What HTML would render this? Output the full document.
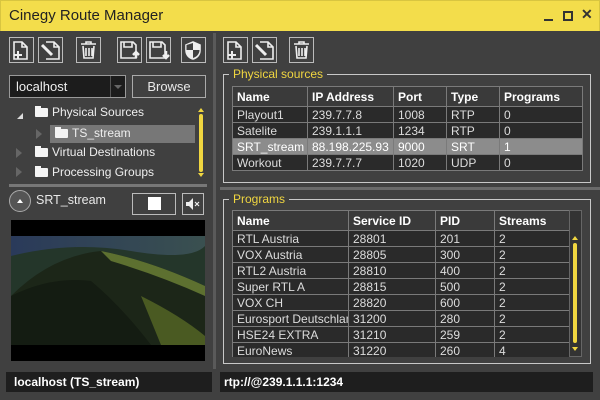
<!DOCTYPE html>
<html><head><style>
*{margin:0;padding:0;box-sizing:border-box}
body{width:600px;height:400px;background:#404040;font-family:"Liberation Sans",sans-serif;color:#e8e8e8;position:relative;overflow:hidden;font-size:12px}
.a{position:absolute}
.tb{left:0;top:0;width:600px;height:31px;background:#f3dd4b;border:1px solid #d8c540;border-bottom:none}
table{border-collapse:collapse;position:absolute;table-layout:fixed}
td,th{border:1px solid #7a7a7a;height:16px;padding:0 4px;font-size:12px;text-align:left;white-space:nowrap;overflow:hidden;color:#ddd;line-height:14px}
th{height:20px;background:#3a3a3a;color:#fff;font-weight:bold;border-color:#7a7a7a}
td{background:#2a2a2a}
tr.sel td{background:#8c8c8c;color:#fff}
.grp{position:absolute;border:1px solid #c8c8c8}
.gt{position:absolute;background:#404040;color:#f0d640;padding:0 4px;font-size:12px;top:-9px;left:5px;line-height:16px}
.tree{position:absolute;font-size:12px;color:#eee}
.fold{display:inline-block;position:relative;width:13px;height:9px;background:#f4f4f4;border-radius:1px;vertical-align:-1px;margin-right:4px}
.fold:before{content:"";position:absolute;left:0;top:-2px;width:6px;height:3px;background:#f4f4f4}
.tri{position:absolute;width:0;height:0;border-top:5px solid transparent;border-bottom:5px solid transparent;border-left:6px solid #666}
</style></head><body>
<div class="a tb"></div>
<div class="a" style="left:9px;top:7px;font-size:15px;color:#222">Cinegy Route Manager</div>
<div class="a" style="left:544px;top:19px;width:9px;height:2px;background:#333"></div>
<div class="a" style="left:563px;top:11px;width:10px;height:10px;border:2px solid #333"></div>
<div class="a" style="left:581px;top:6px;font-size:14px;color:#333;font-weight:bold">✕</div>

<svg class="a" style="left:0;top:0" width="600" height="70" fill="none" stroke="#eee" stroke-width="1.6">
<g><rect x="9.5" y="37.5" width="24" height="25" stroke="#bbb" stroke-width="1"/><path d="M14 42h8l5 5v12H14z M22 42v5h5"/><path d="M14 55h8M18 51v8" stroke-width="2"/></g>
<g><rect x="38.5" y="37.5" width="24" height="25" stroke="#bbb" stroke-width="1"/><path d="M46 42h8l5 5v12H46 M54 42v5h5"/><path d="M42 45l10 10" stroke-width="3"/></g>
<g><rect x="76.5" y="37.5" width="24" height="25" stroke="#bbb" stroke-width="1"/><path d="M81 44h15M86 44v-2h5v2M83 46l1 12h9l1-12M86 48v8M89 48v8M92 48v8"/></g>
<g><rect x="117.5" y="37.5" width="24" height="25" stroke="#bbb" stroke-width="1"/><path d="M121 42h12l3 3v13h-15z M124 42v5h8v-5"/><path d="M136 58v-6M133 55l3-3 3 3" stroke-width="2.5"/></g>
<g><rect x="146.5" y="37.5" width="24" height="25" stroke="#bbb" stroke-width="1"/><path d="M150 42h12l3 3v13h-15z M153 42v5h8v-5"/><path d="M166 51v6M163 55l3 3 3-3" stroke-width="2.5"/></g>
<g><rect x="181.5" y="37.5" width="24" height="25" stroke="#bbb" stroke-width="1"/><path d="M193 42l7 3v5c0 5-3 8-7 9-4-1-7-4-7-9v-5z" fill="#eee"/><path d="M193 50h6.5v0c0 4-3 7-6.5 8z M186.5 45v5h6.5v-7z" fill="#404040" stroke="none"/></g>
<g><rect x="223.5" y="37.5" width="24" height="25" stroke="#bbb" stroke-width="1"/><path d="M228 42h8l5 5v12H228z M236 42v5h5"/><path d="M228 55h8M232 51v8" stroke-width="2"/></g>
<g><rect x="252.5" y="37.5" width="24" height="25" stroke="#bbb" stroke-width="1"/><path d="M260 42h8l5 5v12H260 M268 42v5h5"/><path d="M256 45l10 10" stroke-width="3"/></g>
<g><rect x="289.5" y="37.5" width="24" height="25" stroke="#bbb" stroke-width="1"/><path d="M294 44h15M299 44v-2h5v2M296 46l1 12h9l1-12M299 48v8M302 48v8M305 48v8"/></g>
</svg>

<div class="a" style="left:9px;top:75px;width:117px;height:23px;background:#1c1c1c;border:1px solid #999"></div>
<div class="a" style="left:16px;top:79px;font-size:13px;color:#eee">localhost</div>
<div class="a" style="left:110px;top:76px;width:1px;height:21px;background:#555"></div>
<div class="a" style="left:114px;top:85px;border-left:4px solid transparent;border-right:4px solid transparent;border-top:4px solid #666"></div>
<div class="a" style="left:132px;top:75px;width:74px;height:23px;border:1px solid #aaa;text-align:center;line-height:21px;font-size:13px">Browse</div>

<div class="a" style="left:17px;top:113px;border-left:6px solid transparent;border-bottom:6px solid #ddd"></div>
<div class="tree" style="left:35px;top:105px"><span class="fold"></span>Physical Sources</div>
<div class="a" style="left:50px;top:125px;width:145px;height:18px;background:#777"></div>
<div class="tri" style="left:36px;top:129px"></div>
<div class="tree" style="left:55px;top:126px"><span class="fold"></span>TS_stream</div>
<div class="tri" style="left:16px;top:148px"></div>
<div class="tree" style="left:35px;top:145px"><span class="fold"></span>Virtual Destinations</div>
<div class="tri" style="left:16px;top:167px"></div>
<div class="tree" style="left:35px;top:165px"><span class="fold"></span>Processing Groups</div>
<div class="a" style="left:198px;top:108px;border-left:3px solid transparent;border-right:3px solid transparent;border-bottom:4px solid #f0d640"></div>
<div class="a" style="left:199px;top:114px;width:4px;height:58px;background:#f0d640;border-radius:2px"></div>
<div class="a" style="left:198px;top:173px;border-left:3px solid transparent;border-right:3px solid transparent;border-top:4px solid #f0d640"></div>
<div class="a" style="left:9px;top:184px;width:198px;height:3px;background:#777"></div>

<div class="a" style="left:9px;top:190px;width:22px;height:22px;border-radius:50%;border:1px solid #aaa;background:#555"></div>
<div class="a" style="left:17px;top:199px;border-left:3px solid transparent;border-right:3px solid transparent;border-bottom:4px solid #fff"></div>
<div class="a" style="left:36px;top:193px;font-size:12.5px">SRT_stream</div>
<div class="a" style="left:132px;top:193px;width:44px;height:22px;border:1px solid #bbb"></div>
<div class="a" style="left:148px;top:197px;width:13px;height:13px;background:#fff"></div>
<div class="a" style="left:182px;top:193px;width:22px;height:22px;border:1px solid #bbb"></div>
<svg class="a" style="left:185px;top:197px" width="16" height="14"><path d="M1 5h3l4-4v12L4 9H1z" fill="#eee"/><path d="M10 5l4 4M14 5l-4 4" stroke="#eee" stroke-width="1.2"/></svg>
<div class="a" style="left:11px;top:220px;width:194px;height:141px;background:#000"></div>
<svg class="a" style="left:11px;top:236px" width="194" height="109">
<defs><linearGradient id="sky" x1="0" y1="0" x2="1" y2="0"><stop offset="0" stop-color="#2a3a5a"/><stop offset="1" stop-color="#3a5050"/></linearGradient></defs>
<rect width="194" height="109" fill="url(#sky)"/>
<path d="M0 20 Q60 5 120 15 T194 10 V109 H0z" fill="#24362a"/>
<path d="M0 60 Q40 20 90 15 Q140 25 194 50 V109 H0z" fill="#1c2618"/>
<path d="M90 15 Q140 25 194 50 V60 Q150 40 100 25z" fill="#5d7030"/>
<path d="M130 60 Q170 80 194 100 V109 H150z" fill="#4a5a22"/>
<path d="M0 109 V60 Q40 40 80 45 Q110 70 140 109z" fill="#141c12"/>
</svg>
<div class="a" style="left:213px;top:33px;width:3px;height:336px;background:#5a5a5a"></div>

<div class="grp" style="left:223px;top:74px;width:368px;height:109px"><div class="gt">Physical sources</div></div>
<table style="left:232px;top:86px;width:350px">
<colgroup><col style="width:75px"><col style="width:86px"><col style="width:53px"><col style="width:53px"><col style="width:83px"></colgroup>
<tr><th>Name</th><th>IP Address</th><th>Port</th><th>Type</th><th>Programs</th></tr>
<tr><td>Playout1</td><td>239.7.7.8</td><td>1008</td><td>RTP</td><td>0</td></tr>
<tr><td>Satelite</td><td>239.1.1.1</td><td>1234</td><td>RTP</td><td>0</td></tr>
<tr class="sel"><td>SRT_stream</td><td>88.198.225.93</td><td>9000</td><td>SRT</td><td>1</td></tr>
<tr><td>Workout</td><td>239.7.7.7</td><td>1020</td><td>UDP</td><td>0</td></tr>
</table>
<div class="a" style="left:220px;top:187px;width:380px;height:3px;background:#6a6a6a"></div>

<div class="grp" style="left:223px;top:199px;width:368px;height:165px"><div class="gt">Programs</div></div>
<div class="a" style="left:232px;top:210px;width:350px;height:147px;overflow:hidden">
<table style="left:0;top:0;width:337px">
<colgroup><col style="width:116px"><col style="width:87px"><col style="width:59px"><col style="width:75px"></colgroup>
<tr><th>Name</th><th>Service ID</th><th>PID</th><th>Streams</th></tr>
<tr><td>RTL Austria</td><td>28801</td><td>201</td><td>2</td></tr>
<tr><td>VOX Austria</td><td>28805</td><td>300</td><td>2</td></tr>
<tr><td>RTL2 Austria</td><td>28810</td><td>400</td><td>2</td></tr>
<tr><td>Super RTL A</td><td>28815</td><td>500</td><td>2</td></tr>
<tr><td>VOX CH</td><td>28820</td><td>600</td><td>2</td></tr>
<tr><td>Eurosport Deutschland</td><td>31200</td><td>280</td><td>2</td></tr>
<tr><td>HSE24 EXTRA</td><td>31210</td><td>259</td><td>2</td></tr>
<tr><td>EuroNews</td><td>31220</td><td>260</td><td>4</td></tr>
</table>
<div class="a" style="left:337px;top:0;width:13px;height:147px;background:#333;border:1px solid #666"></div>
<div class="a" style="left:340px;top:26px;border-left:3px solid transparent;border-right:3px solid transparent;border-bottom:4px solid #f0d640"></div>
<div class="a" style="left:341px;top:33px;width:4px;height:100px;background:#f0d640;border-radius:2px"></div>
<div class="a" style="left:340px;top:137px;border-left:3px solid transparent;border-right:3px solid transparent;border-top:4px solid #f0d640"></div>
</div>

<div class="a" style="left:6px;top:372px;width:206px;height:20px;background:#1e1e1e;font-weight:bold;font-size:12px;padding:3px 8px;color:#fff">localhost (TS_stream)</div>
<div class="a" style="left:220px;top:372px;width:373px;height:20px;background:#1e1e1e;font-weight:bold;font-size:12px;padding:3px 4px;color:#fff">rtp://@239.1.1.1:1234</div>
</body></html>
